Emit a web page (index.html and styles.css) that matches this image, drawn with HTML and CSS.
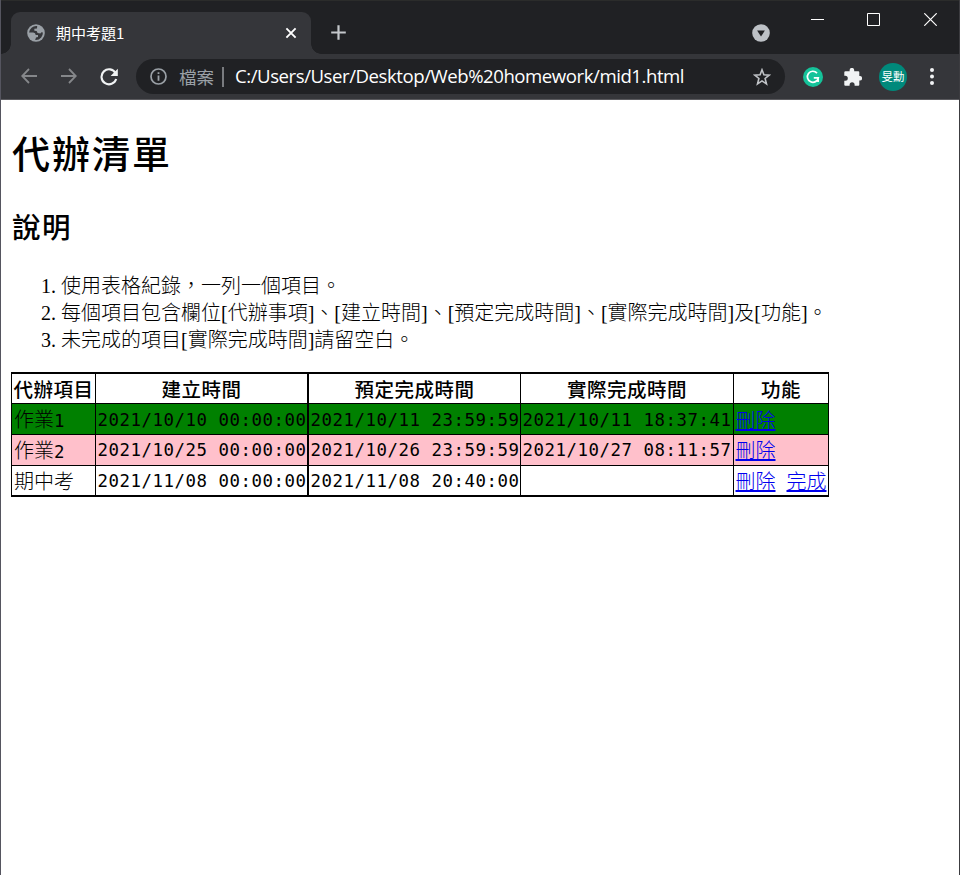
FILE: index.html
```html
<!DOCTYPE html>
<html lang="zh-Hant">
<head>
<meta charset="utf-8">
<title>期中考題1</title>
<link rel="stylesheet" href="styles.css">
</head>
<body>
<div class="window">
  <header class="tabstrip">
    <div class="tab">
      <svg class="globe" width="18" height="18" viewBox="0 0 18 18"><circle cx="9" cy="9" r="8.8" fill="#9aa0a6"/><path d="M10.2 2.1 Q7 1.6 4.6 3.8 Q2.4 5.8 2.1 8.6 L6.2 8.6 Q8.6 8.8 8.7 11 L11 11 L11 13 L9 13.4 L8.2 16 Q12 16.2 14.2 13.4 Q16 11 15.9 8.4 L14.4 8.2 L13.4 9.4 L10.6 8.9 L9.6 7 L7.4 6.8 L7.3 4.8 L10 4.4 Z" fill="#35363a"/></svg>
      <span class="tab-title">期中考題1</span>
      <svg class="tab-close" width="12" height="12" viewBox="0 0 12 12"><path d="M1.4 1.4 10.6 10.6M10.6 1.4 1.4 10.6" stroke="#fff" stroke-width="1.9"/></svg>
    </div>
    <svg class="new-tab" width="16" height="16" viewBox="0 0 16 16"><path d="M7.5 .2V14.8M.2 7.5H14.8" stroke="#c4c7cb" stroke-width="2.2"/></svg>
    <svg class="tab-search" width="18" height="18" viewBox="0 0 18 18"><circle cx="9" cy="9" r="8.8" fill="#bdc1c6"/><path d="M5.1 6.6H12.9L9 12.4Z" fill="#202124"/></svg>
    <div class="controls">
      <svg width="13" height="13" viewBox="0 0 13 13"><path d="M0 6.5H13" stroke="#fff"/></svg>
      <svg width="13" height="13" viewBox="0 0 13 13"><path d="M.5 .5H12.5V12.5H.5Z" stroke="#fff" fill="none"/></svg>
      <svg class="close" width="13" height="13" viewBox="0 0 13 13"><path d="M.3 .3 12.7 12.7M12.7 .3 .3 12.7" stroke="#fff" stroke-width="1.2"/></svg>
    </div>
  </header>
  <nav class="toolbar">
    <svg class="back" width="16" height="16" viewBox="0 0 16 16"><path d="M16 8H1.5M8 1 1.2 8 8 15" stroke="#85878a" stroke-width="1.8" fill="none"/></svg>
    <svg class="forward" width="16" height="16" viewBox="0 0 16 16"><path d="M0 8H14.5M8 1 14.8 8 8 15" stroke="#85878a" stroke-width="1.8" fill="none"/></svg>
    <svg class="reload" width="18" height="18" viewBox="0 0 18 18"><path d="M15.6 5.2A7.5 7.5 0 1 0 16.2 11" stroke="#f1f3f4" stroke-width="2.1" fill="none"/><path d="M17.8 .8V8H10.6Z" fill="#f1f3f4"/></svg>
    <div class="omnibox">
      <svg class="info" width="17" height="17" viewBox="0 0 17 17"><circle cx="8.5" cy="8.5" r="7.5" stroke="#9aa0a6" stroke-width="1.7" fill="none"/><path d="M8.5 7.5V12.7M8.5 4.2V6" stroke="#9aa0a6" stroke-width="1.8"/></svg>
      <span class="scheme">檔案</span>
      <span class="divider"></span>
      <span class="url">C:/Users/User/Desktop/Web%20homework/mid1.html</span>
      <svg class="star" width="18" height="18" viewBox="0 0 18 18"><path d="M9 1.8 10.9 6.7 16.2 7.1 12.1 10.5 13.5 15.9 9 12.9 4.5 15.9 5.9 10.5 1.8 7.1 7.1 6.7Z" stroke="#c0c3c7" stroke-width="1.6" fill="none"/></svg>
    </div>
    <svg class="grammar" width="20" height="20" viewBox="0 0 20 20"><circle cx="10" cy="10" r="10" fill="#15c39a"/><path d="M14 6.1A5.5 5.5 0 1 0 15.3 10.8H10.8M15.1 10.8V15" stroke="#fff" stroke-width="1.7" fill="none"/></svg>
    <svg class="puzzle" width="18" height="18" viewBox="0 0 18 18"><path d="M1.5 3.2H5.6V2.2A2.3 2.3 0 0 1 10.2 2.2V3.2H14.3Q15.3 3.2 15.3 4.2V8H15.8A2.3 2.3 0 0 1 15.8 12.6H15.3V16.8Q15.3 17.8 14.3 17.8H10.6V16.8A2.5 2.5 0 0 0 5.6 16.8V17.8H1.3Q.3 17.8 .3 16.8V12.8H1.3A2.5 2.5 0 0 0 1.3 7.8H.3V4.2Q.3 3.2 1.5 3.2Z" fill="#f1f3f4"/></svg>
    <span class="avatar">旻勳</span>
    <svg class="menu" width="4" height="17" viewBox="0 0 4 17"><g fill="#f1f3f4"><circle cx="2" cy="2" r="2"/><circle cx="2" cy="8.5" r="2"/><circle cx="2" cy="15" r="2"/></g></svg>
  </nav>
  <main class="page">
    <h1>代辦清單</h1>
    <h2>說明</h2>
    <ol>
      <li>使用表格紀錄，一列一個項目。</li>
      <li>每個項目包含欄位[代辦事項]、[建立時間]、[預定完成時間]、[實際完成時間]及[功能]。</li>
      <li>未完成的項目[實際完成時間]請留空白。</li>
    </ol>
    <table>
      <colgroup><col class="c-item"><col class="c-created"><col class="c-due"><col class="c-done"><col class="c-action"></colgroup>
      <thead>
        <tr><th>代辦項目</th><th>建立時間</th><th>預定完成時間</th><th>實際完成時間</th><th>功能</th></tr>
      </thead>
      <tbody>
        <tr class="on-time"><td>作業<b>1</b></td><td><time>2021/10/10 00:00:00</time></td><td><time>2021/10/11 23:59:59</time></td><td><time>2021/10/11 18:37:41</time></td><td><a href="#">刪除</a></td></tr>
        <tr class="late"><td>作業<b>2</b></td><td><time>2021/10/25 00:00:00</time></td><td><time>2021/10/26 23:59:59</time></td><td><time>2021/10/27 08:11:57</time></td><td><a href="#">刪除</a></td></tr>
        <tr><td>期中考</td><td><time>2021/11/08 00:00:00</time></td><td><time>2021/11/08 20:40:00</time></td><td></td><td><a href="#">刪除</a><a href="#" class="finish">完成</a></td></tr>
      </tbody>
    </table>
  </main>
</div>
</body>
</html>
```
FILE: styles.css
```css
* { box-sizing: border-box; }
body { margin: 0; background: #fff; overflow: hidden; }
svg { display: block; flex: none; }
.window {
  height: 875px;
  border-left: 1px solid #55555f;
  border-right: 1px solid #3c3c40;
}
.tabstrip {
  display: flex;
  height: 54px;
  padding-left: 10px;
  background: #202124;
  border-top: 1px solid #2b2c2b;
}
.tab {
  position: relative;
  display: flex;
  align-items: center;
  width: 300px;
  height: 42px;
  margin-top: 11px;
  padding: 0 14px 0 16px;
  background: #35363a;
  border-radius: 9px 9px 0 0;
}
.tab::before, .tab::after {
  content: "";
  position: absolute;
  bottom: 0;
  width: 10px;
  height: 10px;
}
.tab::before { left: -10px; background: radial-gradient(circle at 0 0, #202124 9.5px, #35363a 10px); }
.tab::after { right: -10px; background: radial-gradient(circle at 100% 0, #202124 9.5px, #35363a 10px); }
.tab-title {
  flex: 1;
  margin-left: 11px;
  color: #fff;
  font: 15px/20px "Noto Sans CJK TC", sans-serif;
}
.new-tab { margin: 24px 0 0 20px; }
.tab-search { margin: 23px 0 0 auto; }
.controls { display: flex; gap: 43px; margin: 12px 22px 0 41px; }
.close { margin-left: 1px; }
.toolbar {
  display: flex;
  align-items: center;
  height: 46px;
  padding: 0 25px 0 20px;
  background: #35363a;
  border-bottom: 1px solid #5a5a5e;
}
.back, .forward { margin-bottom: 1px; }
.forward { margin-left: 24px; }
.reload { margin-left: 23px; }
.omnibox {
  display: flex;
  align-items: center;
  width: 649px;
  height: 35px;
  margin-left: 18px;
  padding: 0 14px;
  background: #202124;
  border-radius: 18px;
}
.scheme { margin-left: 12px; color: #9aa0a6; font: 17.5px/24px "Noto Sans CJK TC", sans-serif; }
.divider { width: 2px; height: 20px; margin: 0 11px 0 8px; background: #797b7f; }
.url { flex: 1; padding-bottom: 1px; color: #fff; font: 18.6px/26px "Open Sans", sans-serif; white-space: nowrap; letter-spacing: -.45px; }
.grammar { margin-left: 17.5px; }
.puzzle { margin-left: 21px; }
.avatar {
  flex: none;
  width: 28px;
  height: 28px;
  margin-left: 17.5px;
  border-radius: 50%;
  background: #00897b;
  color: #fff;
  font: 11.5px/27px "Noto Sans CJK TC", sans-serif;
  text-align: center;
}
.menu { margin-left: auto; }
.page {
  padding: 25px 0 0 10px;
  color: #000;
  font: 20px/27px "Liberation Serif", "Noto Sans CJK TC", sans-serif;
}
h1, h2 { margin: 0; font-family: "Noto Sans CJK TC", sans-serif; font-weight: 500; }
h1 { padding-left: 1px; font-size: 38px; line-height: 54px; letter-spacing: 2px; }
h2 { margin-top: 27px; padding-left: 1px; font-size: 28.5px; line-height: 40px; letter-spacing: 1.5px; }
ol { margin: 27px 0 18px; padding-left: 50px; font-weight: 300; }
li { white-space: nowrap; }
table {
  width: 818px;
  table-layout: fixed;
  border-collapse: separate;
  border-spacing: 0;
  border: solid #000;
  border-width: 2px 0 0 1px;
}
.c-item { width: 84px; }
.c-created { width: 213px; }
.c-due { width: 212px; }
.c-done { width: 213px; }
.c-action { width: 95px; }
th, td {
  height: 31px;
  padding: 0 0 0 2px;
  border: solid #000;
  border-width: 0 1px 1px 0;
  font-family: "Noto Sans CJK TC", sans-serif;
  line-height: 28px;
  white-space: nowrap;
}
th { height: 30px; padding: 0; font-size: 19.5px; letter-spacing: .5px; font-weight: 500; }
td { font-weight: 300; }
td:last-child { padding-left: 1.5px; }
.on-time td { padding-top: 1px; }
th:nth-child(2), td:nth-child(2) { border-right-width: 2px; }
tbody tr:last-child td { border-bottom-width: 2px; }
time, td b { font: 17.4px/26px "DejaVu Sans Mono", monospace; letter-spacing: .525px; }
time { display: block; margin-left: -.4px; }
.on-time { background: green; }
.late { background: pink; }
a { color: #00e; text-decoration: underline; }
.finish { margin-left: 11px; }
```
